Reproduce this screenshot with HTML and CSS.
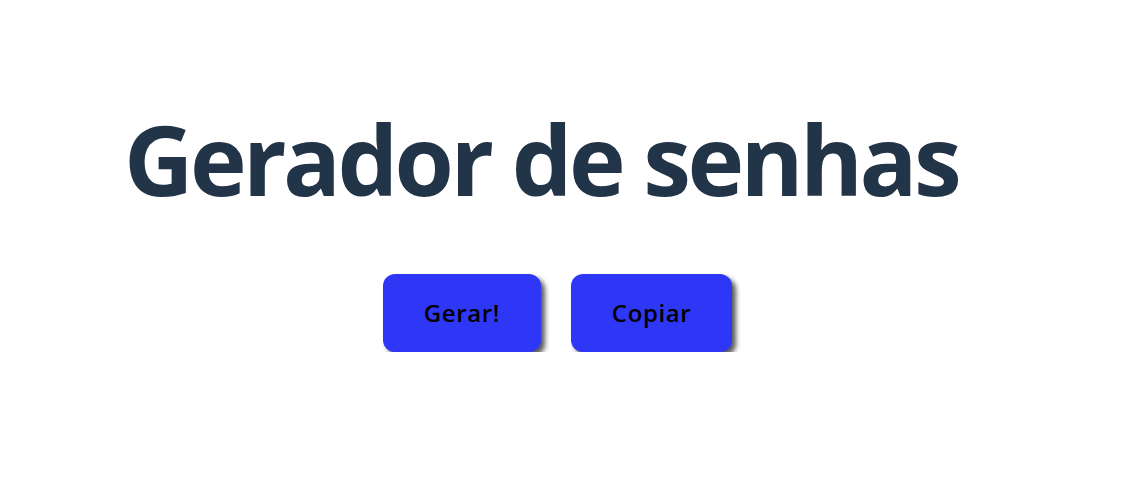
FILE: index.html
```html
<!DOCTYPE html>
<html lang="pt-BR">
<head>
<meta charset="utf-8">
<title>Gerador de senhas</title>
<link rel="stylesheet" href="styles.css">
</head>
<body>
<main class="page">
  <h1 class="title">Gerador de senhas</h1>
  <div class="actions">
    <button class="btn" type="button">Gerar!</button>
    <button class="btn" type="button">Copiar</button>
  </div>
</main>
</body>
</html>
```
FILE: styles.css
```css
html, body {
  margin: 0;
  padding: 0;
  background: #ffffff;
}

.page {
  padding-top: 111px;
  font-family: "Open Sans", "Noto Sans", sans-serif;
}

.title {
  margin: 0;
  padding-left: 124px;
  font-size: 96px;
  line-height: 96px;
  font-weight: 700;
  letter-spacing: -3.6px;
  color: #223448;
  white-space: nowrap;
}

.actions {
  display: flex;
  justify-content: center;
  gap: 30px;
  margin-top: 67px;
  padding-right: 6px;
}

.btn {
  font-family: "Open Sans", "Noto Sans", sans-serif;
  font-size: 24px;
  font-weight: 600;
  line-height: 30px;
  letter-spacing: 0.6px;
  color: #000000;
  background: #2f37f6;
  border: none;
  border-radius: 12px;
  padding: 24px 41px;
  box-shadow: 4px 4px 5px rgba(0, 0, 0, 0.65);
}
```
